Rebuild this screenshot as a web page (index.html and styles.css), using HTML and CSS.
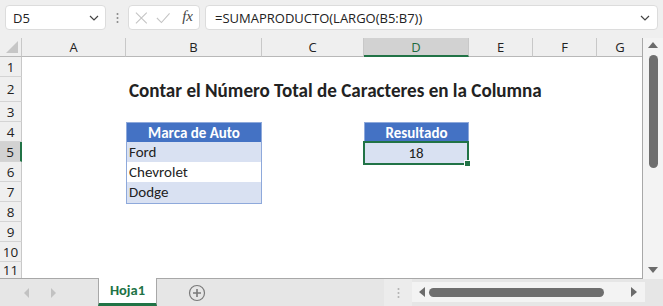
FILE: index.html
```html
<!DOCTYPE html>
<html>
<head>
    <title>Hoja1</title>
    <link rel="stylesheet" href="styles.css">
</head>
<body>
    <div class="formula-bar">
        <div class="name-box">
            <span>D5</span>
            <svg class="chev" width="10" height="6" viewBox="0 0 10 6"><path d="M1 1 L5 5 L9 1" fill="none" stroke="#444" stroke-width="1.2"/></svg>
        </div>
        <div class="grip">
            <svg width="3" height="12" viewBox="0 0 3 12"><circle cx="1.5" cy="2" r="1" fill="#888"/><circle cx="1.5" cy="6" r="1" fill="#888"/><circle cx="1.5" cy="10" r="1" fill="#888"/></svg>
        </div>
        <div class="fx-box">
            <svg width="14" height="14" viewBox="0 0 14 14"><path d="M1 1 L13 13 M13 1 L1 13" stroke="#c4c4c4" stroke-width="1.2"/></svg>
            <svg width="16" height="12" viewBox="0 0 16 12"><path d="M1 6 L6 11 L15 1" fill="none" stroke="#c4c4c4" stroke-width="1.2"/></svg>
            <span class="fx">fx</span>
        </div>
        <div class="formula-input">
            <span>=SUMAPRODUCTO(LARGO(B5:B7))</span>
            <svg class="chev" width="10" height="6" viewBox="0 0 10 6"><path d="M1 1 L5 5 L9 1" fill="none" stroke="#444" stroke-width="1.2"/></svg>
        </div>
    </div>

    <div class="sheet">
        <div class="grid">
            <div class="corner"><span class="tri"></span></div>
            <div class="col-head">A</div>
            <div class="col-head">B</div>
            <div class="col-head">C</div>
            <div class="col-head active">D</div>
            <div class="col-head">E</div>
            <div class="col-head">F</div>
            <div class="col-head last">G</div>

            <div class="row-head">1</div><div class="row-cells"></div>
            <div class="row-head">2</div>
            <div class="row-cells">
                <div class="cell"></div>
                <div class="cell title">Contar el Número Total de Caracteres en la Columna</div>
            </div>
            <div class="row-head">3</div><div class="row-cells"></div>
            <div class="row-head">4</div>
            <div class="row-cells">
                <div class="cell"></div>
                <div class="cell th">Marca de Auto</div>
                <div class="cell"></div>
                <div class="cell th">Resultado</div>
            </div>
            <div class="row-head active">5</div>
            <div class="row-cells">
                <div class="cell"></div>
                <div class="cell td band">Ford</div>
                <div class="cell"></div>
                <div class="cell td band num selected">18<span class="handle"></span></div>
            </div>
            <div class="row-head">6</div>
            <div class="row-cells">
                <div class="cell"></div>
                <div class="cell td">Chevrolet</div>
            </div>
            <div class="row-head">7</div>
            <div class="row-cells">
                <div class="cell"></div>
                <div class="cell td band">Dodge</div>
            </div>
            <div class="row-head">8</div><div class="row-cells"></div>
            <div class="row-head">9</div><div class="row-cells"></div>
            <div class="row-head">10</div><div class="row-cells"></div>
            <div class="row-head">11</div><div class="row-cells"></div>
        </div>
        <div class="vscroll">
            <span class="arrow-up"></span>
            <span class="vthumb"></span>
            <span class="arrow-down"></span>
        </div>
    </div>

    <div class="tab-bar">
        <div class="nav">
            <span class="nav-left"></span>
            <span class="nav-right"></span>
        </div>
        <div class="tab">Hoja1</div>
        <div class="add">
            <svg width="18" height="18" viewBox="0 0 18 18"><circle cx="9" cy="9" r="7.5" fill="none" stroke="#7a7a7a" stroke-width="1.2"/><path d="M9 5 V13 M5 9 H13" stroke="#7a7a7a" stroke-width="1.6"/></svg>
        </div>
        <div class="spacer"></div>
        <div class="hgrip">
            <svg width="3" height="12" viewBox="0 0 3 12"><circle cx="1.5" cy="2" r="1" fill="#b0b0b0"/><circle cx="1.5" cy="6" r="1" fill="#b0b0b0"/><circle cx="1.5" cy="10" r="1" fill="#b0b0b0"/></svg>
        </div>
        <div class="hscroll">
            <span class="arrow-left"></span>
            <span class="hthumb"></span>
            <span class="arrow-right"></span>
        </div>
        <div class="end"></div>
    </div>
</body>
</html>
```

FILE: styles.css
```css
body {
    margin: 0;
    width: 663px;
    height: 306px;
    overflow: hidden;
    background-color: #efefef;
    font-family: "Segoe UI", "Open Sans", "Noto Sans", sans-serif;
    color: #222;
}
.formula-bar {
    height: 38px;
    display: flex;
    align-items: flex-start;
    padding: 5px 5px 0 5px;
    box-sizing: border-box;
    background-color: #efefef;
}
.name-box {
    width: 101px;
    height: 25px;
    box-sizing: border-box;
    background-color: #fff;
    border: 1px solid #dcdcdc;
    border-radius: 4px;
    display: flex;
    align-items: center;
    justify-content: space-between;
    padding: 0 6px 0 7px;
    font-size: 13px;
}
.grip {
    width: 22px;
    height: 25px;
    display: flex;
    align-items: center;
    justify-content: center;
}
.fx-box {
    width: 72px;
    height: 25px;
    box-sizing: border-box;
    background-color: #fff;
    border: 1px solid #dcdcdc;
    border-radius: 4px;
    display: flex;
    align-items: center;
    padding: 0 6px 0 6px;
    gap: 8px;
}
.fx {
    font-family: "Liberation Serif", serif;
    font-style: italic;
    font-size: 15px;
    color: #444;
    margin-left: 4px;
    margin-top: -3px;
}
.formula-input {
    flex: 1;
    margin-left: 5px;
    height: 25px;
    box-sizing: border-box;
    background-color: #fff;
    border: 1px solid #dcdcdc;
    border-radius: 4px;
    display: flex;
    align-items: center;
    justify-content: space-between;
    padding: 0 7px 0 9px;
    font-size: 13px;
}

.sheet {
    display: flex;
    height: 241px;
}
.grid {
    width: 643px;
    display: grid;
    grid-template-columns: 22px 104px 136px 102px 105px 64px 64px 46px;
    grid-template-rows: 19px 20px 25px repeat(8, 20px) 17px;
    background-color: #fff;
    overflow: hidden;
    border-right: 1px solid #a8a8a8;
    border-bottom: 1px solid #a8a8a8;
    box-sizing: border-box;
}
.corner {
    background-color: #efefef;
    border-right: 1px solid #c8c8c8;
    border-bottom: 1px solid #b8b8b8;
    position: relative;
}
.tri {
    position: absolute;
    right: 3px;
    bottom: 3px;
    width: 0;
    height: 0;
    border-left: 12px solid transparent;
    border-bottom: 12px solid #c6c6c6;
}
.col-head {
    background-color: #efefef;
    border-right: 1px solid #c8c8c8;
    border-bottom: 1px solid #b8b8b8;
    font-size: 13px;
    text-align: center;
    line-height: 19px;
    color: #222;
}
.col-head.last {
    border-right: none;
}
.col-head.active {
    background-color: #d2d2d2;
    border-bottom: 2px solid #217346;
    color: #1e6b3f;
    line-height: 18px;
}
.row-head {
    grid-column: 1;
    background-color: #efefef;
    border-right: 1px solid #c8c8c8;
    border-bottom: 1px solid #d4d4d4;
    font-size: 13.5px;
    text-align: center;
    display: flex;
    align-items: center;
    justify-content: center;
    color: #222;
}
.row-head.active {
    background-color: #d2d2d2;
    border-right: 2px solid #217346;
}
.row-cells {
    grid-column: 2 / -1;
    display: grid;
    grid-template-columns: 104px 136px 102px 105px;
}
.cell {
    font-family: "Carlito", "Lato", "Open Sans", sans-serif;
    font-size: 15px;
    white-space: nowrap;
}
.title {
    font-weight: bold;
    font-size: 19.1px;
    padding-left: 3px;
    line-height: 28px;
}
.th {
    background-color: #4472c4;
    color: #fff;
    font-weight: bold;
    text-align: center;
    line-height: 21px;
    border: 1px solid #8ea9db;
    border-bottom: none;
}
.td {
    border: 1px solid #8ea9db;
    border-top: none;
    padding-left: 2px;
    line-height: 21px;
    background-color: #fff;
}
.band {
    background-color: #d9e1f2;
}
.num {
    text-align: center;
    padding-left: 0;
}
.selected {
    position: relative;
    border: 2px solid #217346;
    margin: -1px 0 -1px -1px;
    line-height: 20px;
}
.handle {
    position: absolute;
    right: -4px;
    bottom: -4px;
    width: 5px;
    height: 5px;
    background-color: #217346;
    border: 1px solid #fff;
}

.vscroll {
    width: 20px;
    background-color: #f3f3f3;
    position: relative;
}
.arrow-up {
    position: absolute;
    left: 5px;
    top: 4px;
    border-left: 5px solid transparent;
    border-right: 5px solid transparent;
    border-bottom: 6px solid #6b6b6b;
}
.vthumb {
    position: absolute;
    left: 6px;
    top: 17px;
    width: 9px;
    height: 113px;
    border-radius: 5px;
    background-color: #6e6e6e;
}
.arrow-down {
    position: absolute;
    left: 5px;
    bottom: 6px;
    border-left: 5px solid transparent;
    border-right: 5px solid transparent;
    border-top: 6px solid #6b6b6b;
}

.tab-bar {
    height: 27px;
    display: flex;
    background-color: #e6e6e6;
}
.nav {
    width: 98px;
    display: flex;
    align-items: center;
    gap: 22px;
    padding-left: 24px;
    box-sizing: border-box;
}
.nav-left {
    border-top: 5px solid transparent;
    border-bottom: 5px solid transparent;
    border-right: 5px solid #c2c2c2;
}
.nav-right {
    border-top: 5px solid transparent;
    border-bottom: 5px solid transparent;
    border-left: 5px solid #c2c2c2;
}
.tab {
    width: 59px;
    box-sizing: border-box;
    background-color: #fff;
    border-left: 1px solid #a8a8a8;
    border-right: 1px solid #a8a8a8;
    margin-top: -1px;
    border-bottom: 3px solid #217346;
    color: #217346;
    font-family: "Carlito", "Lato", "Open Sans", sans-serif;
    font-weight: bold;
    font-size: 14.5px;
    text-align: center;
    line-height: 25px;
}
.add {
    width: 80px;
    display: flex;
    align-items: center;
    justify-content: center;
}
.spacer {
    width: 147px;
}
.hgrip {
    width: 28px;
    background-color: #ececec;
    display: flex;
    align-items: center;
    justify-content: center;
}
.hscroll {
    width: 233px;
    height: 20px;
    margin-top: 3px;
    background-color: #f3f3f3;
    display: flex;
    align-items: center;
    padding: 0 5px 0 7px;
    box-sizing: border-box;
}
.arrow-left {
    border-top: 5px solid transparent;
    border-bottom: 5px solid transparent;
    border-right: 6px solid #6b6b6b;
}
.hthumb {
    width: 175px;
    height: 9px;
    border-radius: 5px;
    background-color: #6e6e6e;
    margin-left: 4px;
}
.arrow-right {
    margin-left: auto;
    border-top: 5px solid transparent;
    border-bottom: 5px solid transparent;
    border-left: 6px solid #6b6b6b;
    margin-right: 3px;
}
.end {
    flex: 1;
}
```
